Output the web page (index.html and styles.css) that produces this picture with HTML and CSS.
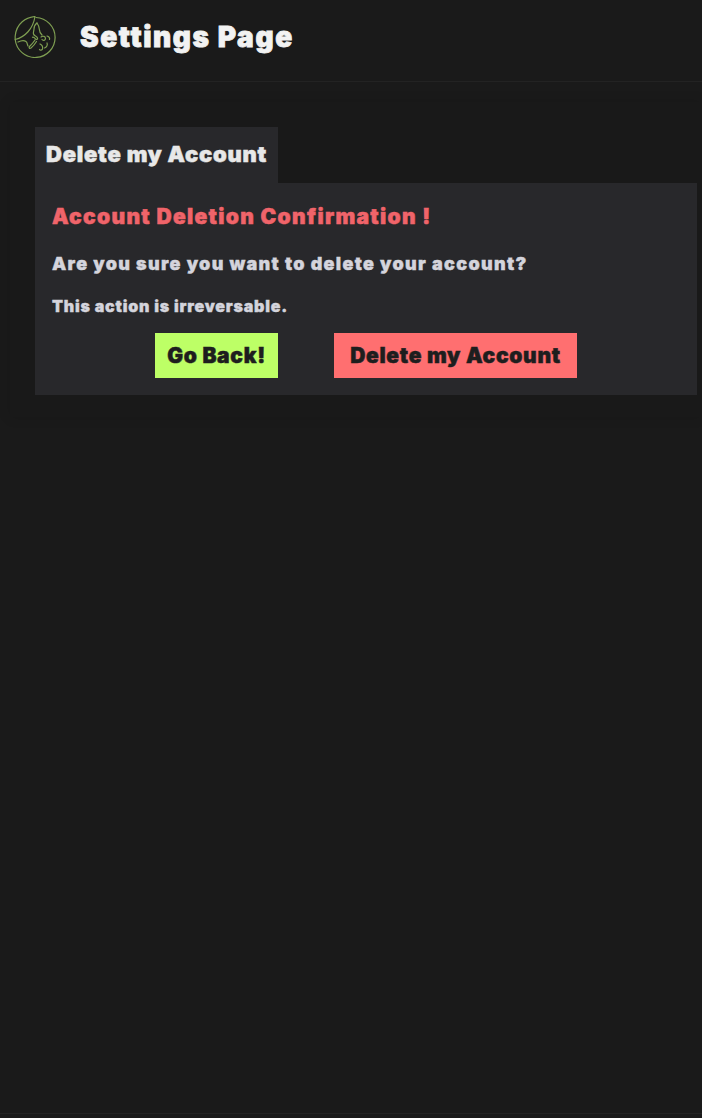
FILE: index.html
```html
<!DOCTYPE html>
<html lang="en">
<head>
  <meta charset="UTF-8" />
  <meta name="viewport" content="width=device-width, initial-scale=1.0"/>
  <title>Settings Page</title>
  <link rel="stylesheet" href="styles.css">
</head>
<body>

  <div class="navbar">
    <svg class="logo" viewBox="0 0 42 42" width="42" height="42" fill="none" stroke="#7f9f52" stroke-width="1.2" stroke-linecap="round" stroke-linejoin="round">
      <path d="M22 1.500a20 20 0 1 1-20.800 22"/>
      <path d="M21 .5C12 1.500 2.500 7 1.200 20c-.1 1.500 0 2.500 0 3.500C11 21 19 13 21 .5z"/>
      <path d="M23 7c-2 1.500-3 3.500-3 6 0 2 -1 3 -.5 5 .5 2 3 2 4 4 .5 1.500-1 2-2 .8-1-1-2-2-3-1.500"/>
      <path d="M23 7c1.500 2 2.500 4 2.500 7 0 2 1 3.500 2.500 5"/>
      <path d="M21 24c-1.500 2.500-3.500 4.500-5.500 6.500-1 1 0 2.500 1.500 1.500 2.500-2 4-4 5.500-6.500"/>
      <path d="M27 21c2-1.500 4.500-.5 4.500 1.500 0 2-2.500 2.500-3.500 1"/>
      <path d="M33 20c2 .5 3 2 2.500 3.500"/>
      <path d="M26 28c2 1 3 3 2.500 5-.5 1.500-2.500 1.500-3 .5"/>
      <path d="M33 27c1 2-.5 4.500-2.500 5"/>
      <path d="M4 26c3-1.500 6-2 8-.5 1.500 1 1 3 2 4.500"/>
    </svg>
    <h1>Settings Page</h1>
  </div>

  <div class="content">
    <div class="tab">Delete my Account</div>
    <div class="panel">
      <h2>Account Deletion Confirmation !</h2>
      <h3>Are you sure you want to delete your account?</h3>
      <p>This action is irreversable.</p>
      <div class="actions">
        <button class="btn btn-back" type="button">Go Back!</button>
        <button class="btn btn-delete" type="button">Delete my Account</button>
      </div>
    </div>
  </div>

  <div class="footer"></div>

</body>
</html>
```

FILE: styles.css
```css
* {
  margin: 0;
  padding: 0;
  box-sizing: border-box;
}

body {
  background-color: #1a1a1a;
  color: #e6e6e6;
  font-family: 'Inter', sans-serif;
  font-weight: 900;
  height: 1118px;
  overflow: hidden;
  position: relative;
}

.navbar {
  display: flex;
  align-items: center;
  height: 82px;
  padding: 0 14px 7px;
  background-color: #1a1a1a;
  border-bottom: 1px solid #232323;
}
.logo {
  flex: none;
}
.navbar h1 {
  margin-left: 24px;
  font-size: 28px;
  font-weight: 900;
  letter-spacing: 1.6px;
  color: #f2f2f2;
  -webkit-text-stroke: 0.8px #f2f2f2;
}

.content {
  margin: 20px 0 0 10px;
  padding: 25px 5px 22px 25px;
  background-color: #191919;
  box-shadow: 0 0 12px rgba(0, 0, 0, 0.12);
}

.tab {
  display: inline-block;
  height: 56px;
  width: 243px;
  padding: 14px 0 0 11px;
  background-color: #28282b;
  font-size: 22px;
  letter-spacing: 0.75px;
  color: #e8e8e8;
  -webkit-text-stroke: 0.5px #e8e8e8;
  vertical-align: top;
}

.panel {
  background-color: #28282b;
  height: 212px;
  padding: 20px 17px 0;
}
.panel h2 {
  font-size: 21px;
  font-weight: 900;
  letter-spacing: 1.3px;
  color: #f0646a;
  line-height: 28px;
  -webkit-text-stroke: 0.5px #f0646a;
}
.panel h3 {
  margin-top: 21px;
  font-size: 18px;
  font-weight: 900;
  letter-spacing: 1.3px;
  color: #d4d4dc;
  line-height: 24px;
  -webkit-text-stroke: 0.4px #d4d4dc;
}
.panel p {
  margin-top: 19px;
  font-size: 16px;
  letter-spacing: 0.8px;
  color: #d4d4dc;
  line-height: 22px;
  -webkit-text-stroke: 0.4px #d4d4dc;
}

.actions {
  display: flex;
  gap: 56px;
  margin: 16px 0 0 103px;
}
.btn {
  height: 45px;
  border: none;
  font-family: inherit;
  font-size: 21px;
  font-weight: 900;
  letter-spacing: 0.7px;
  color: #1e1e1e;
  -webkit-text-stroke: 0.5px #1e1e1e;
  cursor: pointer;
}
.btn-back {
  width: 123px;
  background-color: #bdff66;
}
.btn-delete {
  width: 243px;
  background-color: #ff6f70;
}

.footer {
  position: absolute;
  left: 0;
  right: 0;
  bottom: 4px;
  border-top: 1px solid #232323;
}
```
